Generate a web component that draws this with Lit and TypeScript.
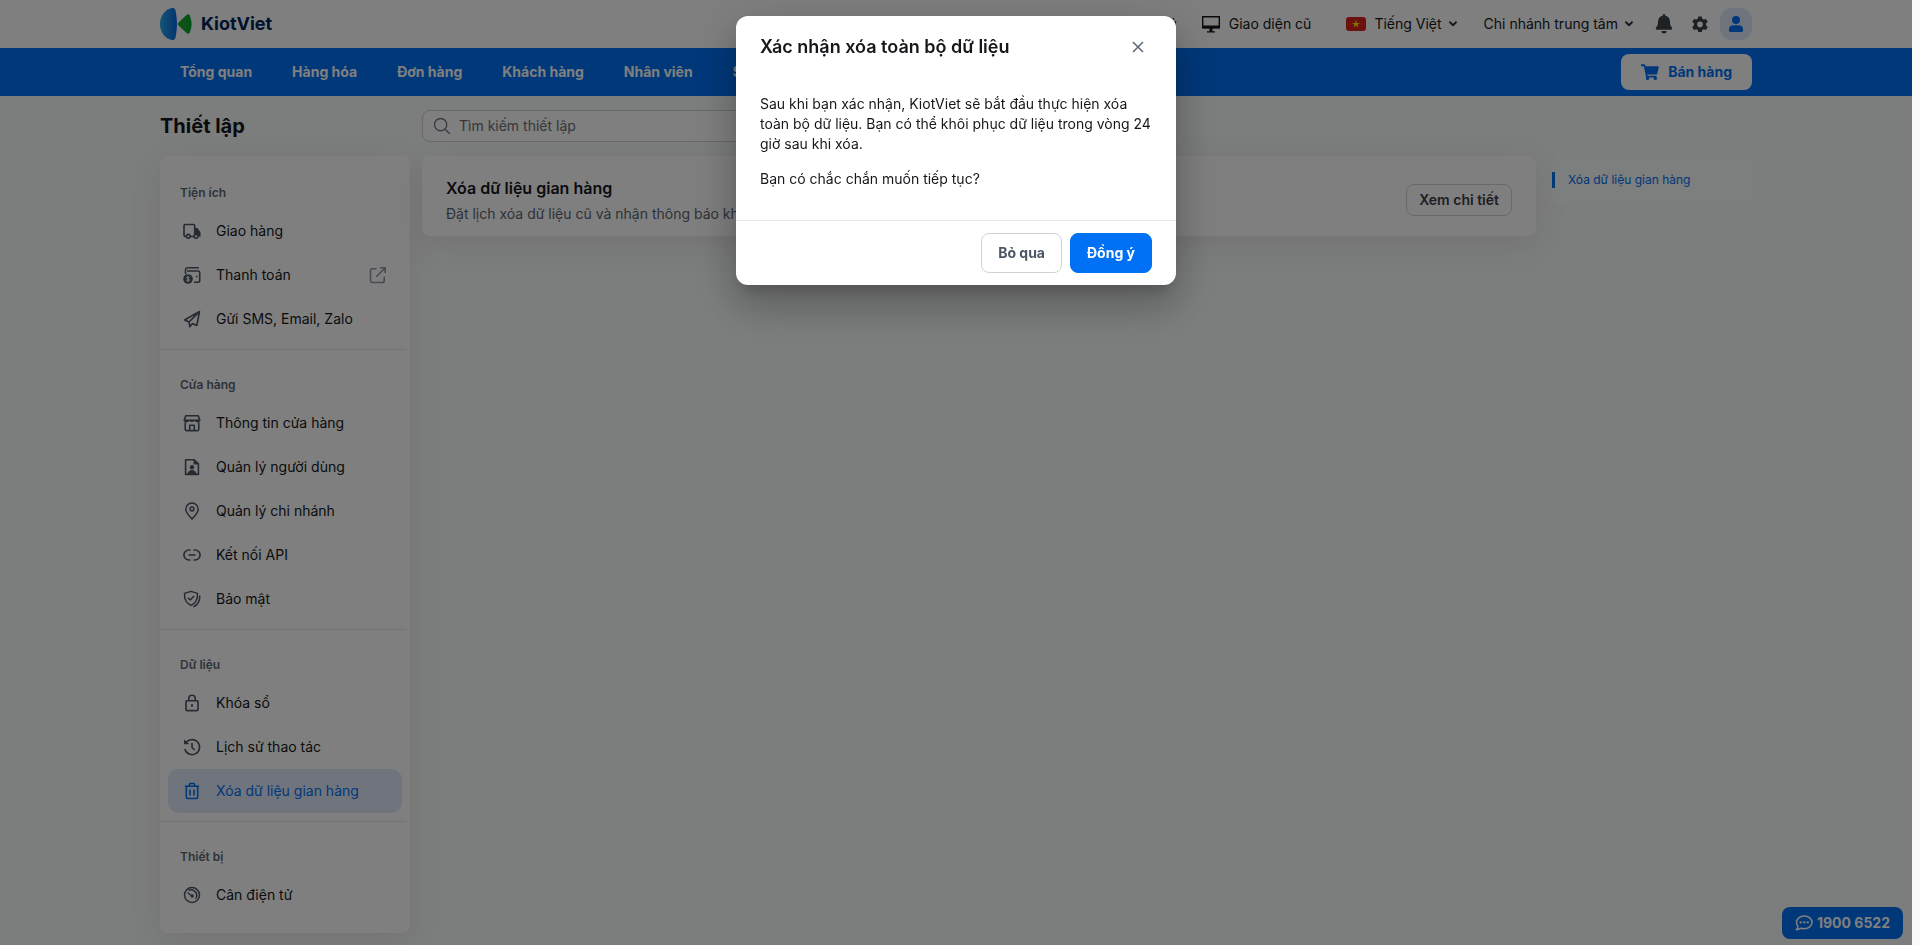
import { LitElement, html, css, svg, nothing } from "lit";
import { customElement, property } from "lit/decorators.js";

const glyphs = {
  truck: svg`<g fill="none" stroke="currentColor" stroke-width="1.6"><path d="M4.200 15.500H3.200a1.200 1.200 0 0 1-1.200-1.200V4.700A1.200 1.200 0 0 1 3.200 3.500H11.500a1.200 1.200 0 0 1 1.200 1.200V13.500M8.500 15.500h3.500"/><circle cx="6.300" cy="15.300" r="1.900"/><circle cx="14" cy="15.300" r="1.900"/></g><path fill="currentColor" d="M12.500 7h3l3 4.200v4.500h-2a2.600 2.600 0 0 0-4-2.300z"/>`,
  pay: svg`<g fill="none" stroke="currentColor" stroke-width="1.600"><path d="M3.500 9V4.500A2 2 0 0 1 5.500 2.700H17M5 6h11a1.700 1.700 0 0 1 1.700 1.700v7.800a1.700 1.700 0 0 1-1.700 1.700h-4M14 11.500h1.500"/></g><circle cx="6" cy="14" r="4.800" fill="currentColor"/><path fill="none" stroke="#fff" stroke-width="1" d="M7.500 12.400c-1-.9-3-.5-2.900.6.1 1.200 2.900.8 2.900 2 0 1.100-2 1.400-3 .4M6 11.200v5.600"/>`,
  plane: svg`<path fill="none" stroke="currentColor" stroke-width="1.600" stroke-linejoin="round" d="M17.500 2.500 2.500 11l4.500 2 .8 4.800 2.700-3.300 4.300 2zM7 13l10.500-10.500"/>`,
  shop: svg`<g fill="none" stroke="currentColor" stroke-width="1.600" stroke-linejoin="round"><path d="M3.800 2.700h12.400l1.600 4.500H2.200zM3.200 9.500v6.600a1.500 1.500 0 0 0 1.500 1.500h10.600a1.500 1.500 0 0 0 1.500-1.500V9.500M2.200 7.200c1 2 3.500 2 4.500.2M8 7.200c1 1.300 3 1.300 4 0M13.300 7.400c1 1.800 3.500 1.800 4.500-.2M7.700 17.500v-5.200h4.600v5.200"/></g>`,
  user: svg`<path fill="none" stroke="currentColor" stroke-width="1.600" stroke-linejoin="round" d="M3.600 2.700h8.600l4.200 4.200v10.500H3.600z"/><path fill="currentColor" d="M11.500 2.500v5h5zM5.500 17.500c0-6 9-6 9 0z"/><circle cx="10" cy="10.300" r="2.200" fill="currentColor"/>`,
  pin: svg`<g fill="none" stroke="currentColor" stroke-width="1.500"><path d="M10 18c-3-3.500-6.200-6.300-6.200-9.800a6.200 6.200 0 0 1 12.400 0c0 3.500-3.200 6.300-6.200 9.800z"/><circle cx="10" cy="8" r="1.900"/></g>`,
  link: svg`<path fill="none" stroke="currentColor" stroke-width="1.600" d="M8.500 5H6.900a5 5 0 0 0 0 10h1.600M11.500 5h1.600a5 5 0 0 1 0 10h-1.600M6.500 10h7"/>`,
  shield: svg`<g fill="none" stroke="currentColor" stroke-width="1.500" stroke-linejoin="round"><path d="M9 2.400l6.500 2c.3 5.500-1.500 9.800-6.500 12C4 14.200 2.200 9.900 2.500 4.400z"/><path d="M6 8.800l2.200 2.200 3.800-4M17.800 6.500c.2 5-2 9.400-6.500 11.400"/></g>`,
  lock: svg`<g fill="none" stroke="currentColor" stroke-width="1.600"><rect x="4" y="7.800" width="12" height="9.800" rx="1"/><path d="M6.800 7.800V5.400a3.200 3.200 0 0 1 6.400 0v2.400M10 11v3"/></g>`,
  history: svg`<g fill="none" stroke="currentColor" stroke-width="1.600"><path d="M3.500 6.500A7.500 7.500 0 1 1 2.800 12M10 6v4.500l2.700 2.500"/></g><path fill="currentColor" d="M2 2.500l5.500 4.800H2z"/>`,
  trash: svg`<path fill="none" stroke="currentColor" stroke-width="1.600" d="M2.800 5.300h14.400M4.300 5.300v10.900a1.300 1.300 0 0 0 1.300 1.300h8.800a1.300 1.300 0 0 0 1.300-1.300V5.300M7 5l.9-2.500h4.200L13 5M8 8.500v6M12 8.500v6"/>`,
  scale: svg`<g fill="none" stroke="currentColor" stroke-width="1.500"><circle cx="10" cy="10" r="7.500"/><path d="M6.500 5.500c4-2 8.700 1 8.300 5.500-.1 1-.5 2-1.200 2.800M10 11 5.500 7.500"/></g><circle cx="10.200" cy="11" r="1.700" fill="currentColor"/>`,
  external: svg`<path fill="none" stroke="currentColor" stroke-width="1.600" d="M8.500 3.800H4.300a1.800 1.800 0 0 0-1.800 1.800v10.100a1.800 1.800 0 0 0 1.800 1.800h10.100a1.800 1.800 0 0 0 1.800-1.800V11.500M12 2.800h5.200V8M17 3 8.300 11.700"/>`,
  search: svg`<g fill="none" stroke="currentColor" stroke-width="1.500"><circle cx="8.500" cy="8.500" r="6.800"/><path d="M13.500 13.500l5 5"/></g>`,
  close: svg`<path fill="none" stroke="currentColor" stroke-width="1.500" d="M5 5l10 10M15 5 5 15"/>`,
  monitor: svg`<path fill="none" stroke="currentColor" stroke-width="1.400" d="M1.700 2.700h16.600v11H1.700z"/><path fill="currentColor" d="M1.500 11.500h17v2.800h-17zM8.500 14h3v3.200H14v1.300H6v-1.300h2.500z"/>`,
  chevron: svg`<path fill="none" stroke="currentColor" stroke-width="3.600" stroke-linecap="round" stroke-linejoin="round" d="M4 6.500l6 6 6-6"/>`,
  bell: svg`<path fill="currentColor" d="M10 0c.8 0 1.300.6 1.300 1.300v.5c3 .6 4.700 2.900 4.700 5.900 0 3.500 1 4.800 2 5.900.6.800.1 2.100-1 2.100H3c-1.100 0-1.600-1.300-1-2.100 1-1.100 2-2.400 2-5.900 0-3 1.700-5.300 4.700-5.900v-.5C8.700.6 9.200 0 10 0zM7.500 17h5a2.500 2.500 0 0 1-5 0z"/>`,
  gear: svg`<path fill="currentColor" fill-rule="evenodd" d="M7.800.5h4.400l.6 2.900 1.900 1.100 2.800-.9 2.200 3.800-2.200 2v2.200l2.200 2-2.200 3.800-2.800-.9-1.900 1.100-.6 2.900H7.800l-.6-2.900-1.900-1.100-2.800.9-2.200-3.800 2.200-2V9.400l-2.200-2 2.200-3.800 2.800.9 1.900-1.100zM10 7a3.500 3.500 0 1 0 0 7 3.500 3.500 0 0 0 0-7z"/>`,
  person: svg`<path fill="currentColor" d="M10 0a5 5 0 1 1 0 10 5 5 0 0 1 0-10zM6.500 11.500h7a5.300 5.300 0 0 1 5.300 5v1.700a1.800 1.800 0 0 1-1.800 1.800H3a1.800 1.800 0 0 1-1.800-1.800v-1.700a5.300 5.300 0 0 1 5.300-5z"/>`,
  cart: svg`<path fill="currentColor" d="M.5 1.500h3.300c.5 0 .8.300.9.700l.3 1.500h13.800c.6 0 1 .6.900 1.100l-1.700 7.300a.9.900 0 0 1-.9.700H7l.3 1.400h9.200c.7 0 1 .8.700 1.500a1.900 1.900 0 1 1-2.800.3H8.800a1.900 1.900 0 1 1-3.100-.1L3.200 3.500H.5A.5.500 0 0 1 0 3v-1a.5.500 0 0 1 .5-.5z"/>`,
  chat: svg`<path fill="none" stroke="currentColor" stroke-width="1.700" stroke-linejoin="round" d="M10.300 2.200c4.900 0 8.600 3.100 8.600 7.100s-3.700 7.100-8.600 7.100c-1.300 0-2.600-.2-3.700-.6-1.200.9-2.900 1.700-5.200 1.700 1.200-1.100 1.900-2.400 2-3.700a6.400 6.400 0 0 1-1.700-4.500c0-4 3.700-7.100 8.600-7.100z"/><g fill="currentColor"><circle cx="6.400" cy="9.300" r="1.300"/><circle cx="10.300" cy="9.300" r="1.300"/><circle cx="14.200" cy="9.300" r="1.300"/></g>`,
};
type Glyph = keyof typeof glyphs;

@customElement("kv-icon")
class KvIcon extends LitElement {
  @property() name: Glyph = "close";
  static styles = css`
    :host { display: inline-flex; flex: none; width: 20px; height: 20px; }
    svg { width: 100%; height: 100%; display: block; }
  `;
  render() {
    return html`<svg viewBox="0 0 20 20" aria-hidden="true">${glyphs[this.name]}</svg>`;
  }
}

interface Item { icon: Glyph; label: string; external?: boolean; active?: boolean; }
const groups: { title: string; items: Item[] }[] = [
  { title: "Tiện ích", items: [
    { icon: "truck", label: "Giao hàng" },
    { icon: "pay", label: "Thanh toán", external: true },
    { icon: "plane", label: "Gửi SMS, Email, Zalo" },
  ] },
  { title: "Cửa hàng", items: [
    { icon: "shop", label: "Thông tin cửa hàng" },
    { icon: "user", label: "Quản lý người dùng" },
    { icon: "pin", label: "Quản lý chi nhánh" },
    { icon: "link", label: "Kết nối API" },
    { icon: "shield", label: "Bảo mật" },
  ] },
  { title: "Dữ liệu", items: [
    { icon: "lock", label: "Khóa sổ" },
    { icon: "history", label: "Lịch sử thao tác" },
    { icon: "trash", label: "Xóa dữ liệu gian hàng", active: true },
  ] },
  { title: "Thiết bị", items: [{ icon: "scale", label: "Cân điện tử" }] },
];
const menu = ["Tổng quan", "Hàng hóa", "Đơn hàng", "Khách hàng", "Nhân viên", "Sổ quỹ"];

@customElement("app-root")
class AppRoot extends LitElement {
  static styles = css`
    :host {
      display: block;
      min-height: 100vh;
      padding-right: 8px;
      box-sizing: border-box;
      background: #fafafa;
      color: #15171a;
      font: 400 14px/20px Inter, "Noto Sans", sans-serif;
    }
    * { box-sizing: border-box; }
    a { color: inherit; text-decoration: none; }
    button { font: inherit; color: inherit; cursor: pointer; }
    h1, h2, h3, p, ul { margin: 0; padding: 0; }
    ul { list-style: none; }
    .page { min-height: 100vh; background: #f8fcfa; }
    .wrap { max-width: 1592px; margin: 0 auto; }
    .top { background: #fff; }
    .top .wrap { height: 48px; display: flex; align-items: center; justify-content: space-between; }
    .brand { display: flex; align-items: center; gap: 9px; font-size: 18px; line-height: 24px; font-weight: 700; color: #00265a; }
    .brand svg { width: 32px; height: 32px; }
    .tools { display: flex; align-items: center; }
    .tool { display: flex; align-items: center; border: 0; padding: 0; background: none; }
    .old { gap: 8px; margin: 0 35px 0 24px; }
    .lang { gap: 8px; margin-right: 26px; }
    .branch { gap: 6px; margin-right: 20px; }
    .lang .chev { margin-left: -2px; }
    .flag { width: 20px; height: 14px; }
    .chev { width: 10px; height: 10px; color: #2a2f36; }
    .bell { margin-right: 18px; color: #3d4248; }
    .gear { margin-right: 12px; color: #3d4248; }
    .gear kv-icon { width: 16px; height: 16px; }
    .me { width: 32px; height: 32px; justify-content: center; border-radius: 12px; background: #dfe8f8; color: #0070f4; }
    .me kv-icon { width: 16px; height: 16px; }
    .nav { background: #0070f4; color: #fff; font-weight: 700; }
    .nav .wrap { height: 48px; display: flex; align-items: center; justify-content: space-between; }
    .menu { display: flex; gap: 40px; padding-left: 20px; }
    .sell { display: flex; align-items: center; gap: 9px; height: 36px; padding: 0 20px; border: 0; border-radius: 8px; background: #fff; color: #0070f4; }
    .sell kv-icon { width: 18px; height: 18px; }
    .grid { display: grid; grid-template-columns: 250px minmax(0, 1fr) 200px; column-gap: 12px; align-items: start; }
    .head { height: 60px; align-items: center; }
    .title { font-size: 20px; line-height: 28px; font-weight: 700; }
    .search { display: flex; align-items: center; gap: 8px; height: 32px; width: 480px; padding: 0 10px; border: 1px solid #d0d2d6; border-radius: 8px; background: #fff; color: #6c7686; }
    .search kv-icon { width: 18px; height: 18px; }
    .search input { flex: 1; border: 0; outline: 0; padding: 0; background: none; font: inherit; color: inherit; }
    .search input::placeholder { color: #6b6e73; opacity: 1; }
    .card { border-radius: 8px; background: #fff; box-shadow: 0 8px 32px rgba(60, 40, 40, 0.1); }
    .side { padding: 2px 4px 8px 0; }
    .group { padding: 0 4px 8px 8px; border-bottom: 1px solid #e6e7ea; }
    .group:last-child { border-bottom: 0; }
    .group h3 { padding: 27px 12px 8px; font-size: 12px; line-height: 16px; font-weight: 600; color: #5c6675; }
    .item { display: flex; align-items: center; height: 44px; padding: 0 14px; gap: 14px; border-radius: 10px; }
    .item kv-icon { color: #4c5665; }
    .item .ext { margin-left: auto; color: #8e95a2; }
    .item.active, .item.active kv-icon { color: #0070f4; }
    .item.active { background: #e1eafa; }
    .setting { display: flex; align-items: center; justify-content: space-between; padding: 20px 24px 12px; margin-right: 4px; }
    .setting h2 { font-size: 16px; line-height: 24px; font-weight: 600; }
    .setting p { margin-top: 4px; color: #5c6470; }
    .detail { height: 32px; padding: 0 12px; border: 1px solid #d0d2d6; border-radius: 8px; background: #fff; color: #3c4046; font-weight: 600; }
    .toc { height: 48px; border-radius: 8px; display: flex; align-items: center; background: #fbfcfc; font-size: 12px; line-height: 16px; color: #0070f4; }
    .toc a { padding-left: 13px; border-left: 3px solid #0070f4; }
    .hotline { position: fixed; right: 17px; bottom: 6px; display: flex; align-items: center; gap: 4px; height: 32px; padding: 0 13px; border-radius: 8px; background: #0070f4; color: #fff; font-weight: 700; }
    .hotline kv-icon { width: 18px; height: 18px; }
    .overlay { position: fixed; inset: 0 8px 0 0; display: flex; justify-content: center; align-items: flex-start; padding-top: 16px; background: rgba(0, 0, 0, 0.5); }
    .modal { width: 440px; border-radius: 12px; background: #fff; box-shadow: 0 11px 15px -7px rgba(0, 0, 0, 0.2), 0 24px 38px 3px rgba(0, 0, 0, 0.14), 0 9px 46px 8px rgba(0, 0, 0, 0.12); }
    .modal header { display: flex; justify-content: space-between; align-items: center; height: 62px; padding: 0 28px 0 24px; }
    .modal h2 { font-size: 18px; line-height: 26px; font-weight: 600; }
    .close { display: flex; padding: 0; border: 0; background: none; color: #5c6675; }
    .text { display: grid; gap: 15px; padding: 16px 24px 31px; }
    .modal footer { display: flex; justify-content: flex-end; gap: 8px; padding: 12px 24px; border-top: 1px solid #e6e8eb; }
    .btn { height: 40px; padding: 0 16px; border: 1px solid #d0d2d8; border-radius: 8px; background: #fff; color: #4c5665; font-weight: 700; }
    .primary { border-color: #0070f4; background: #0070f4; color: #fff; }
  `;

  render() {
    return html`
      <div class="page">
        <div class="top"><div class="wrap">
          <a class="brand" href="#">
            <svg viewBox="0 0 32 32" aria-hidden="true">
              <defs>
                <linearGradient id="b" x1="0" y1="0" x2="1" y2="0"><stop offset="0" stop-color="#28a8e8"/><stop offset="1" stop-color="#0868e0"/></linearGradient>
                <linearGradient id="g" x1="0" y1="0" x2="1" y2="0"><stop offset="0" stop-color="#28a838"/><stop offset="1" stop-color="#08a028"/></linearGradient>
              </defs>
              <path fill="url(#b)" d="M12 0C5 1 0 8 0 16s5 15 12 16c2 .2 3-.5 3.500-2.500 2-9 2-18 0-27C15 .5 14-.2 12 0z"/>
              <path fill="url(#g)" d="M18.500 14.500 26.500 7c1-.9 2.500-1 3.200.5 2.500 5.500 2.500 11.500 0 17-.7 1.500-2.200 1.400-3.200.5l-8-7.500c-1-1-1-2 0-3z"/>
            </svg>
            <span>KiotViet</span>
          </a>
          <div class="tools">
            <a href="#">Góp ý</a>
            <a class="tool old" href="#"><kv-icon name="monitor"></kv-icon>Giao diện cũ</a>
            <button class="tool lang">
              <svg class="flag" viewBox="0 0 20 14" aria-hidden="true"><rect width="20" height="14" rx="3" fill="#d8251d"/><path fill="#ffe100" d="M10 3l1 2.900h3l-2.400 1.800.9 2.900L10 8.800l-2.500 1.800.9-2.900L6 5.900h3z"/></svg>
              Tiếng Việt<kv-icon class="chev" name="chevron"></kv-icon>
            </button>
            <button class="tool branch">Chi nhánh trung tâm<kv-icon class="chev" name="chevron"></kv-icon></button>
            <button class="tool bell" aria-label="Thông báo"><kv-icon name="bell"></kv-icon></button>
            <button class="tool gear" aria-label="Thiết lập"><kv-icon name="gear"></kv-icon></button>
            <button class="tool me" aria-label="Tài khoản"><kv-icon name="person"></kv-icon></button>
          </div>
        </div></div>
        <nav class="nav"><div class="wrap">
          <div class="menu">${menu.map((m) => html`<a href="#">${m}</a>`)}</div>
          <button class="sell"><kv-icon name="cart"></kv-icon>Bán hàng</button>
        </div></nav>
        <div class="wrap">
          <div class="grid head">
            <h1 class="title">Thiết lập</h1>
            <label class="search"><kv-icon name="search"></kv-icon><input type="text" aria-label="Tìm kiếm thiết lập" placeholder="Tìm kiếm thiết lập" /></label>
          </div>
          <div class="grid">
            <aside class="card side">
              ${groups.map((g) => html`<section class="group"><h3>${g.title}</h3><ul>
                ${g.items.map((i) => html`<li><a href="#" class="item ${i.active ? "active" : ""}">
                  <kv-icon name=${i.icon}></kv-icon><span>${i.label}</span>
                  ${i.external ? html`<kv-icon class="ext" name="external"></kv-icon>` : nothing}
                </a></li>`)}
              </ul></section>`)}
            </aside>
            <main class="card setting">
              <div><h2>Xóa dữ liệu gian hàng</h2><p>Đặt lịch xóa dữ liệu cũ và nhận thông báo khi hoàn tất</p></div>
              <button class="detail">Xem chi tiết</button>
            </main>
            <div class="toc"><a href="#">Xóa dữ liệu gian hàng</a></div>
          </div>
        </div>
        <a class="hotline" href="#"><kv-icon name="chat"></kv-icon>1900 6522</a>
      </div>
      <div class="overlay">
        <div class="modal" role="dialog" aria-modal="true" aria-labelledby="t">
          <header><h2 id="t">Xác nhận xóa toàn bộ dữ liệu</h2><button class="close" aria-label="Đóng"><kv-icon name="close"></kv-icon></button></header>
          <div class="text">
            <p>Sau khi bạn xác nhận, KiotViet sẽ bắt đầu thực hiện xóa toàn bộ dữ liệu. Bạn có thể khôi phục dữ liệu trong vòng 24 giờ sau khi xóa.</p>
            <p>Bạn có chắc chắn muốn tiếp tục?</p>
          </div>
          <footer><button class="btn">Bỏ qua</button><button class="btn primary">Đồng ý</button></footer>
        </div>
      </div>
    `;
  }
}
